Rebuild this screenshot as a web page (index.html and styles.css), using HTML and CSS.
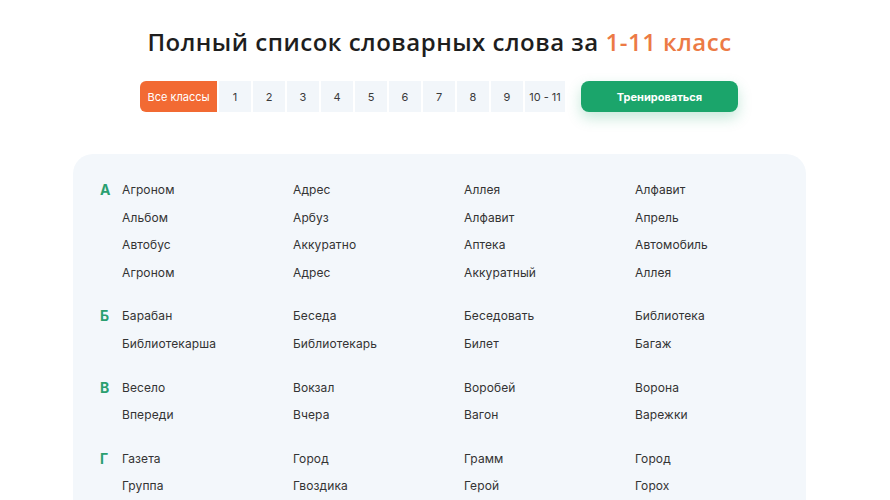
FILE: index.html
```html
<!DOCTYPE html>
<html lang="ru">
<head>
<meta charset="UTF-8">
<title>Словарные слова</title>
<link rel="stylesheet" href="styles.css">
</head>
<body>

<h1 class="title">Полный список словарных слова за <span class="accent">1-11 класс</span></h1>

<div class="toolbar">
    <div class="tabs">
        <a class="tab active">Все классы</a>
        <a class="tab">1</a>
        <a class="tab">2</a>
        <a class="tab">3</a>
        <a class="tab">4</a>
        <a class="tab">5</a>
        <a class="tab">6</a>
        <a class="tab">7</a>
        <a class="tab">8</a>
        <a class="tab">9</a>
        <a class="tab wide">10 - 11</a>
    </div>
    <button class="train-btn">Тренироваться</button>
</div>

<div class="card">
    <div class="group">
        <div class="letter">А</div>
        <div class="words">
            <span>Агроном</span><span>Адрес</span><span>Аллея</span><span>Алфавит</span>
            <span>Альбом</span><span>Арбуз</span><span>Алфавит</span><span>Апрель</span>
            <span>Автобус</span><span>Аккуратно</span><span>Аптека</span><span>Автомобиль</span>
            <span>Агроном</span><span>Адрес</span><span>Аккуратный</span><span>Аллея</span>
        </div>
    </div>
    <div class="group">
        <div class="letter">Б</div>
        <div class="words">
            <span>Барабан</span><span>Беседа</span><span>Беседовать</span><span>Библиотека</span>
            <span>Библиотекарша</span><span>Библиотекарь</span><span>Билет</span><span>Багаж</span>
        </div>
    </div>
    <div class="group">
        <div class="letter">В</div>
        <div class="words">
            <span>Весело</span><span>Вокзал</span><span>Воробей</span><span>Ворона</span>
            <span>Впереди</span><span>Вчера</span><span>Вагон</span><span>Варежки</span>
        </div>
    </div>
    <div class="group">
        <div class="letter">Г</div>
        <div class="words">
            <span>Газета</span><span>Город</span><span>Грамм</span><span>Город</span>
            <span>Группа</span><span>Гвоздика</span><span>Герой</span><span>Горох</span>
        </div>
    </div>
</div>

</body>
</html>
```

FILE: styles.css
```css
body {
    margin: 0;
    font-family: "Open Sans", "Noto Sans", sans-serif;
    color: #222;
    background: #fff;
}
.title {
    margin: 27px 0 0;
    padding-right: 11px;
    font-size: 24px;
    line-height: 30px;
    font-weight: 600;
    letter-spacing: 0.5px;
    text-align: center;
    color: #1e1e1e;
}
.accent {
    color: #ec7a45;
}
.toolbar {
    display: flex;
    justify-content: center;
    align-items: center;
    gap: 16px;
    margin-top: 24px;
    padding-right: 12px;
}
.tabs {
    display: flex;
    gap: 2px;
}
.tab {
    display: flex;
    align-items: center;
    justify-content: center;
    width: 32px;
    height: 31px;
    background: #f2f6fa;
    font-family: Inter, sans-serif;
    font-size: 11px;
    color: #3a3a3a;
}
.tab.wide {
    width: 40px;
}
.tab.active {
    width: 77px;
    background: #f26a33;
    color: #fff;
    border-radius: 6px 0 0 6px;
}
.train-btn {
    width: 157px;
    height: 31px;
    border: none;
    border-radius: 8px;
    background: #1ba56b;
    color: #fff;
    font-family: Inter, sans-serif;
    font-weight: 700;
    font-size: 11px;
    box-shadow: 0 6px 14px rgba(27, 165, 107, 0.25);
}
.card {
    margin: 42px 84px 0 73px;
    padding: 22px 0 0 27px;
    background: #f3f7fb;
    border-radius: 20px;
    min-height: 400px;
}
.group {
    display: flex;
    margin-bottom: 16px;
}
.letter {
    flex-shrink: 0;
    width: 22px;
    line-height: 27.6px;
    font-family: Inter, sans-serif;
    font-weight: 700;
    font-size: 14px;
    color: #2a9f70;
}
.words {
    display: grid;
    grid-template-columns: repeat(4, 171px);
    font-family: Inter, sans-serif;
    font-size: 12px;
    letter-spacing: 0.1px;
    color: #333;
}
.words span {
    line-height: 27.6px;
}
```
